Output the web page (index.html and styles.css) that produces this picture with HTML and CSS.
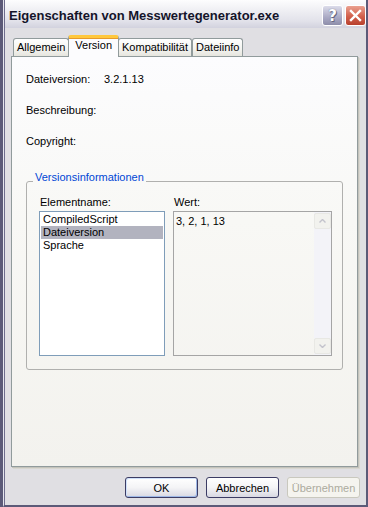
FILE: index.html
```html
<!DOCTYPE html>
<html lang="de">
<head>
    <meta charset="utf-8" />
    <title>Eigenschaften von Messwertegenerator.exe</title>
    <link rel="stylesheet" href="styles.css">
</head>
<body>
    <div class="window">
        <div class="titlebar">
            <span class="title">Eigenschaften von Messwertegenerator.exe</span>
            <div class="caption-buttons">
                <span class="cap-btn help">?</span>
                <span class="cap-btn close">
                    <svg width="13" height="13" viewBox="0 0 13 13">
                        <path d="M2 2 L11 11 M11 2 L2 11" stroke="#fff" stroke-width="2.4" stroke-linecap="square" />
                    </svg>
                </span>
            </div>
        </div>
        <div class="client">
            <div class="tabs">
                <div class="tab">Allgemein</div>
                <div class="tab active">Version</div>
                <div class="tab">Kompatibilität</div>
                <div class="tab">Dateiinfo</div>
            </div>
            <div class="pane">
                <div class="props">
                    <span>Dateiversion:</span><span>3.2.1.13</span>
                    <span>Beschreibung:</span><span></span>
                    <span>Copyright:</span><span></span>
                </div>
                <fieldset class="group">
                    <legend>Versionsinformationen</legend>
                    <div class="group-grid">
                        <span class="label">Elementname:</span>
                        <span class="label">Wert:</span>
                        <ul class="listbox">
                            <li>CompiledScript</li>
                            <li class="selected">Dateiversion</li>
                            <li>Sprache</li>
                        </ul>
                        <div class="valuebox">
                            <div class="value-text">3, 2, 1, 13</div>
                            <div class="scrollbar">
                                <span class="sb-btn">
                                    <svg width="7" height="4" viewBox="0 0 7 4"><path d="M0.5 3.5 L3.5 0.5 L6.5 3.5" fill="none" stroke="#c3c3cc" stroke-width="1.4" /></svg>
                                </span>
                                <span class="sb-track"></span>
                                <span class="sb-btn">
                                    <svg width="7" height="4" viewBox="0 0 7 4"><path d="M0.5 0.5 L3.5 3.5 L6.5 0.5" fill="none" stroke="#c3c3cc" stroke-width="1.4" /></svg>
                                </span>
                            </div>
                        </div>
                    </div>
                </fieldset>
            </div>
            <div class="buttons">
                <button class="btn default">OK</button>
                <button class="btn">Abbrechen</button>
                <button class="btn" disabled>Übernehmen</button>
            </div>
        </div>
    </div>
</body>
</html>
```

FILE: styles.css
```css
body {
    margin: 0;
    background-color: #5c5a78;
    font-family: "Liberation Sans", Arial, sans-serif;
    font-size: 11px;
    color: #000;
}

.window {
    margin-left: 3px;
    width: 365px;
    height: 507px;
    box-sizing: border-box;
    background-color: #e0dfe3;
    border-left: 1px solid #e6e6ee;
    border-right: 2px solid #5c5a78;
    border-bottom: 2px solid #5c5a78;
    display: flex;
    flex-direction: column;
}

/* title bar */
.titlebar {
    height: 28px;
    box-sizing: border-box;
    border-left: 1px solid #6e6c8c;
    padding: 5px 0 0 4px;
    display: flex;
    justify-content: space-between;
    align-items: flex-start;
    background: linear-gradient(#fdfdfe, #f0f0f4 35%, #e2e2ea 75%, #d2d2de);
}

.title {
    margin-top: 3px;
    font-size: 13px;
    line-height: 16px;
    font-weight: bold;
    color: #14142a;
}

.caption-buttons {
    display: flex;
    gap: 2px;
}

.cap-btn {
    width: 21px;
    height: 21px;
    box-sizing: border-box;
    border: 1px solid #fff;
    border-radius: 3px;
    display: flex;
    align-items: center;
    justify-content: center;
}

.help {
    background: linear-gradient(#dcdcea, #a9a9c4 60%, #8e8eaa);
    color: #fff;
    font-family: "DejaVu Sans", sans-serif;
    font-weight: bold;
    font-size: 15px;
    text-shadow: 0 0 1px #50506a, 1px 1px 0 #6a6a86;
}

.close {
    background: linear-gradient(#eaa090, #d2604c 55%, #b8402e);
}

/* client area */
.client {
    flex: 1;
    border-left: 1px solid #6e6c8c;
    padding: 7px 6px 0 6px;
}

.tabs {
    display: flex;
    align-items: flex-end;
    height: 21px;
    padding-left: 2px;
}

.tab {
    height: 18px;
    box-sizing: border-box;
    padding: 2px 3px 0 3px;
    line-height: 13px;
    border: 1px solid #919b9c;
    border-bottom: none;
    border-radius: 3px 3px 0 0;
    background: linear-gradient(#ffffff, #f3f3ef 60%, #e6e5de);
}

.tab.active {
    position: relative;
    z-index: 2;
    height: 22px;
    margin: 0 -1px -1px -1px;
    padding: 1px 6px 0 6px;
    border-top: 3px solid #ffc83c;
    box-shadow: inset 0 1px 0 #e69a2a;
    background: #fcfcfe;
}

.pane {
    width: 347px;
    height: 411px;
    box-sizing: border-box;
    border: 1px solid #919b9c;
    box-shadow: 1px 1px 0 #c4c3bc, 2px 2px 0 #d8d7d0;
    background: linear-gradient(#fcfcfe, #f8f8f5 40%, #f3f2ee);
    padding: 16px 14px 0 14px;
}

.props {
    display: grid;
    grid-template-columns: 78px auto;
    row-gap: 18px;
    line-height: 13px;
}

.props span {
    height: 13px;
}

/* group box */
.group {
    margin: 23px 0 0 0;
    width: 317px;
    box-sizing: border-box;
    border: 1px solid #b0b0ae;
    border-radius: 3px;
    padding: 5px 10px 13px 12px;
}

.group legend {
    margin-left: -6px;
    padding: 0 2px 7px 2px;
    line-height: 13px;
    color: #0046d5;
}

.group-grid {
    display: grid;
    grid-template-columns: 126px 159px;
    column-gap: 8px;
    row-gap: 2px;
}

.label {
    line-height: 13px;
    padding-left: 1px;
}

.listbox {
    margin: 0;
    padding: 1px;
    list-style: none;
    height: 145px;
    box-sizing: border-box;
    border: 1px solid #7f9db9;
    background-color: #fff;
}

.listbox li {
    height: 13px;
    line-height: 13px;
    padding-left: 2px;
}

.listbox li.selected {
    background-color: #b2b3bf;
}

.valuebox {
    height: 145px;
    box-sizing: border-box;
    border: 1px solid #a5a5a5;
    display: flex;
}

.value-text {
    flex: 1;
    padding: 3px 0 0 2px;
    line-height: 13px;
}

.scrollbar {
    width: 17px;
    display: flex;
    flex-direction: column;
    background-color: #f3f3f8;
    padding: 1px 0;
}

.sb-btn {
    height: 16px;
    box-sizing: border-box;
    border: 1px solid #e8e8e4;
    border-radius: 2px;
    background-color: #f2f2ee;
    display: flex;
    align-items: center;
    justify-content: center;
}

.sb-track {
    flex: 1;
}

/* dialog buttons */
.buttons {
    display: flex;
    justify-content: flex-end;
    gap: 8px;
    margin-top: 10px;
}

.btn {
    width: 73px;
    height: 21px;
    padding: 0;
    box-sizing: border-box;
    font-family: "Liberation Sans", Arial, sans-serif;
    font-size: 11px;
    color: #000;
    border: 1px solid #3c3c64;
    border-radius: 3px;
    background: linear-gradient(#ffffff, #f4f4f6 50%, #d8d8e2);
}

.btn.default {
    box-shadow: inset 1px 1px 0 #cfe0fa, inset -1px -1px 0 #9fb8e6;
}

.btn:disabled {
    color: #acab9e;
    border-color: #c9c8be;
    background: #f5f4ef;
}
```
